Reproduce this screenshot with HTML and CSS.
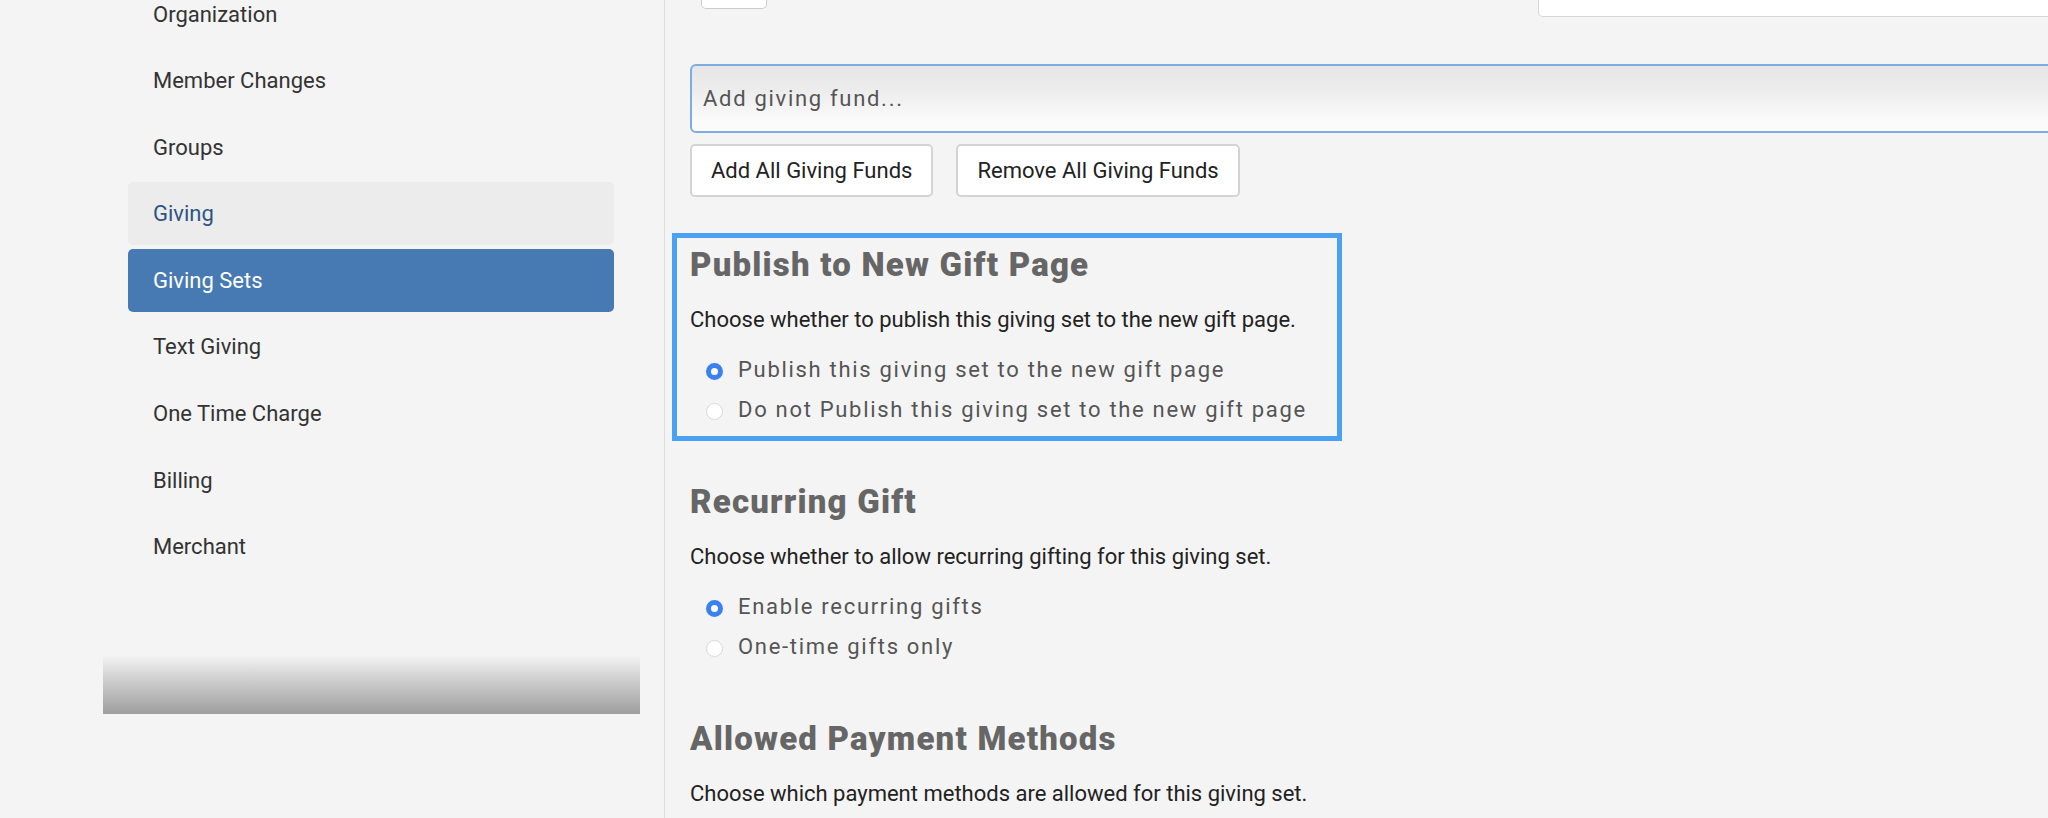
FILE: index.html
```html
<!DOCTYPE html>
<html lang="en">
<head>
  <meta charset="UTF-8">
  <title>Giving Sets</title>
  <link rel="stylesheet" href="styles.css">
</head>
<body>
<div class="app">
  <aside class="sidebar">
    <ul class="nav">
      <li>Organization</li>
      <li>Member Changes</li>
      <li>Groups</li>
      <li class="hover">Giving</li>
      <li class="active">Giving Sets</li>
      <li>Text Giving</li>
      <li>One Time Charge</li>
      <li>Billing</li>
      <li>Merchant</li>
    </ul>
    <div class="shade"></div>
  </aside>

  <main class="content">
    <div class="top-row">
      <div class="stub-btn"></div>
      <div class="stub-input"></div>
    </div>

    <input class="fund-input" type="text" placeholder="Add giving fund...">

    <div class="btn-row">
      <button class="btn">Add All Giving Funds</button>
      <button class="btn">Remove All Giving Funds</button>
    </div>

    <section class="setting highlight">
      <h2>Publish to New Gift Page</h2>
      <p>Choose whether to publish this giving set to the new gift page.</p>
      <label class="radio"><input type="radio" name="publish" checked> Publish this giving set to the new gift page</label>
      <label class="radio"><input type="radio" name="publish"> Do not Publish this giving set to the new gift page</label>
    </section>

    <section class="setting">
      <h2>Recurring Gift</h2>
      <p>Choose whether to allow recurring gifting for this giving set.</p>
      <label class="radio"><input type="radio" name="recurring" checked> Enable recurring gifts</label>
      <label class="radio"><input type="radio" name="recurring"> One-time gifts only</label>
    </section>

    <section class="setting">
      <h2>Allowed Payment Methods</h2>
      <p>Choose which payment methods are allowed for this giving set.</p>
    </section>
  </main>
</div>
</body>
</html>
```

FILE: styles.css
```css
html, body {
  margin: 0;
  height: 100%;
  overflow: hidden;
  background: #f4f4f4;
  font-family: Roboto, "Liberation Sans", sans-serif;
}

.app {
  display: flex;
  height: 818px;
}

/* sidebar */
.sidebar {
  width: 664px;
  flex: none;
  border-right: 1px solid #dedede;
}

.nav {
  list-style: none;
  margin: -17.5px 0 0 128px;
  padding: 0;
  width: 486px;
}

.nav li {
  height: 63px;
  line-height: 63px;
  margin-bottom: 3.6px;
  padding-left: 25px;
  border-radius: 5px;
  font-size: 22px;
  color: #333;
}

.nav li.hover {
  background: #ececec;
  color: #2d5485;
}

.nav li.active {
  background: #477ab3;
  color: #fff;
}

.shade {
  margin: 77px 0 0 103px;
  width: 537px;
  height: 59px;
  background: linear-gradient(#f4f4f4, #d4d4d4 35%, #9e9e9e);
}

/* main */
.content {
  flex: 1;
  padding-left: 25px;
  min-width: 0;
}

.top-row {
  display: flex;
  height: 18px;
}

.stub-btn {
  margin-left: 11px;
  width: 64px;
  height: 8px;
  background: #fff;
  border: 1px solid #ccc;
  border-top: none;
  border-radius: 0 0 5px 5px;
}

.stub-input {
  margin-left: auto;
  width: 528px;
  margin-right: -20px;
  height: 16px;
  background: #fff;
  border: 1px solid #d6d6d6;
  border-top: none;
  border-radius: 0 0 0 5px;
}

.fund-input {
  display: block;
  box-sizing: border-box;
  margin-top: 46px;
  width: 1400px;
  height: 69px;
  padding: 0 0 0 11px;
  border: 2px solid #7eade4;
  border-radius: 6px 0 0 6px;
  background: linear-gradient(#e6e6e6, #ececec 35%, #fbfbfb 85%);
  font-family: inherit;
  font-size: 22px;
  letter-spacing: 1.7px;
  outline: none;
}

.fund-input::placeholder {
  color: #555;
}

.btn-row {
  display: flex;
  gap: 23px;
  margin-top: 11px;
}

.btn {
  height: 53px;
  padding: 0 19px;
  background: #fff;
  border: 2px solid #d4d4d4;
  border-radius: 5px;
  font-family: inherit;
  font-size: 22px;
  color: #222;
}

/* settings sections */
.setting {
  box-sizing: border-box;
  width: 670px;
  margin: 29px 0 0 -18px;
  padding: 7px 13px;
  border: 5px solid transparent;
}

.setting.highlight {
  margin-top: 36px;
  border-color: #4aa0f2;
}

.setting h2 {
  margin: 0;
  font-size: 33px;
  line-height: 40px;
  font-weight: 900;
  letter-spacing: 1.2px;
  color: #666;
}

.setting p {
  margin: 20px 0 14px;
  font-size: 22px;
  line-height: 30px;
  color: #222;
}

.radio {
  display: flex;
  align-items: center;
  height: 40px;
  padding-left: 16px;
  font-size: 22px;
  letter-spacing: 1.7px;
  color: #555;
  white-space: nowrap;
}

.radio input {
  appearance: none;
  -webkit-appearance: none;
  box-sizing: border-box;
  width: 17px;
  height: 17px;
  margin: 4px 15px 0 0;
  border: 1px solid #d8d8d8;
  border-radius: 50%;
  background: #fff;
}

.radio input:checked {
  border: 5px solid #3b82f0;
}
```
